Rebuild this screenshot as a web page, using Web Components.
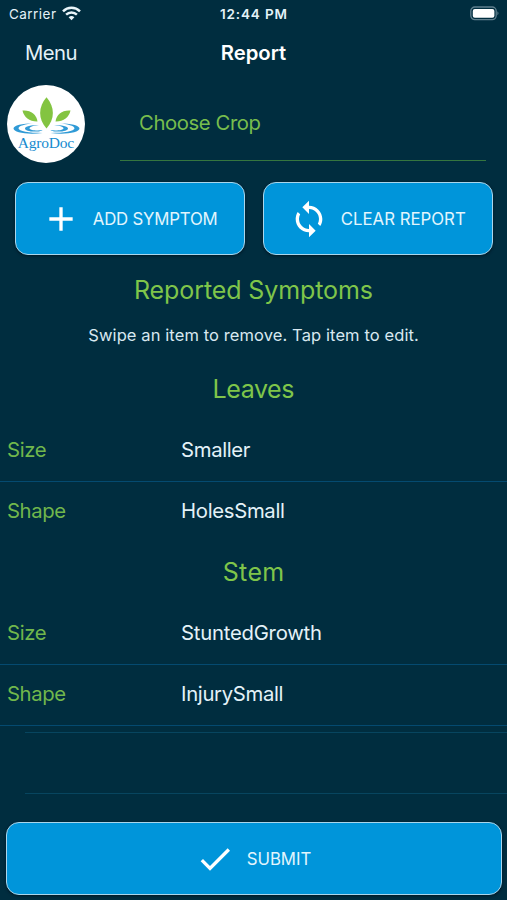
<!DOCTYPE html>
<html lang="en"><head><meta charset="utf-8"><title>Report</title>
<style>
html,body{margin:0;background:#002d3f;}
body{width:507px;height:900px;overflow:hidden;font-family:Inter,"Liberation Sans",sans-serif;color:#e4f2f8}
</style></head><body>
<report-screen></report-screen>
<script>
const define=(name,html,extra)=>customElements.define(name,class extends HTMLElement{
  connectedCallback(){
    if(this.shadowRoot)return;
    this.attachShadow({mode:'open'}).innerHTML=html;
    if(extra)extra(this,this.shadowRoot);
  }
});

/* Single line of text tracked so that it fills the width given in its attribute. */
define('fit-label','<style>:host{display:block;white-space:nowrap;line-height:1.2}span{display:inline-block}</style><span><slot></slot></span>',(host,root)=>{
  const span=root.querySelector('span'),target=+host.getAttribute('width'),n=host.textContent.length;
  const gap=(target-span.getBoundingClientRect().width)/(n-1);
  span.style.letterSpacing=gap+'px';
  span.style.marginRight=-gap+'px';
});

define('status-bar',`<style>
:host{display:grid;grid-template-columns:1fr auto 1fr;align-items:center;height:28px;padding:0 7px 0 9px;box-sizing:border-box;font-size:13.5px}
.left{display:flex;align-items:center;gap:6px}
.left svg{margin-top:-2px}
.time{font-weight:600;margin-right:2px}
.battery{justify-self:end;display:block;margin-top:-1px}
</style>
<div class="left"><fit-label width="47">Carrier</fit-label>
<svg width="19" height="15" viewBox="0 0 19 15"><g fill="none" stroke="#e9f5fa" stroke-width="2.5"><path d="M1 5.3a12.2 12.2 0 0 1 17 0"/><path d="M4.1 8.7a7.8 7.8 0 0 1 10.8 0"/></g><path fill="#e9f5fa" d="M6.6 11.3a4.2 4.2 0 0 1 5.8 0L9.5 14.3z"/></svg></div>
<fit-label class="time" width="67">12:44 PM</fit-label>
<svg class="battery" width="30" height="15" viewBox="0 0 30 15"><rect x=".8" y="1" width="25.4" height="12.6" rx="4" fill="none" stroke="#5f7f8e" stroke-width="1.3"/><rect x="2.8" y="2.9" width="21.6" height="8.9" rx="2" fill="#fff"/><path d="M27.4 5.2q2.2 2 0 4z" fill="#5f7f8e"/></svg>`);

define('nav-bar',`<style>
:host{display:grid;grid-template-columns:1fr auto 1fr;align-items:center;height:49px;box-sizing:border-box;padding:2px 25px 0;font-size:20.3px}
.title{font-weight:600;color:#fff}
</style><fit-label width="52.5">Menu</fit-label><fit-label class="title" width="65.5">Report</fit-label>`);

define('agro-logo',`<style>
:host{display:flex;flex-direction:column;align-items:center;width:78px;height:78px;border-radius:50%;background:#fff;box-sizing:border-box;padding-top:12px}
svg{display:block;flex:none}
fit-label{font:15.5px/18px "Liberation Serif",serif;color:#178bd0;margin-top:-3px}
</style>
<svg width="68" height="40" viewBox="0 0 68 40">
<g fill="#2f9ad6">
<path d="M22 26.200C10 26.400 1.500 28.300 1.500 31.600c0 4 14 6.300 29 4.400C17 36 6.500 34.300 6.500 31.300c0-2.600 7-4.300 15.500-5.100Z"/>
<path d="M27 27.900c-8 0-14 1.400-14 3.600s6 3.700 14 2.900c1.800-.2 3-.7 3.500-1.300-5.500.8-13 .2-13-1.900 0-1.700 4.500-2.700 9.500-3.300Z"/>
<path d="M47 26.200c12 .2 20.500 2.100 20.500 5.400 0 4-14 6.300-29 4.400 13.500 0 24-1.700 24-4.700 0-2.600-7-4.300-15.500-5.100Z"/>
<path d="M42 27.900c8 0 14 1.400 14 3.600s-6 3.700-14 2.900c-1.800-.2-3-.7-3.500-1.300 5.500.8 13 .2 13-1.900 0-1.700-4.500-2.700-9.500-3.300Z"/></g>
<g fill="#83c441"><path d="M34.500 .3C26 10 26 22 34.500 31.500 43 22 43 10 34.500 .3Z"/>
<path d="M10.500 13.500c8-.7 14 3.500 15 11-8 .2-13.500-4-15-11Z"/><path d="M58.500 13.500c-8-.7-14 3.500-15 11 8 .2 13.500-4 15-11Z"/></g></svg>
<fit-label width="56.500">AgroDoc</fit-label>`);

define('crop-picker',`<style>
:host{display:flex;align-items:flex-start;gap:34.500px;height:97px;box-sizing:border-box;padding:8px 21px 0 7px}
:host{height:105px;margin-bottom:0}
.field{flex:1;height:76px;border-bottom:1px solid #35763f;display:flex;align-items:center;padding:1px 0 0 19.500px;box-sizing:border-box;font-size:20.300px;color:#78bd4d}
</style><agro-logo></agro-logo><div class="field"><fit-label width="122">Choose Crop</fit-label></div>`);

const icons={
add:'M19 13h-6v6h-2v-6H5v-2h6V5h2v6h6v2z',
sync:'M12 4V1L8 5l4 4V6c3.310 0 6 2.690 6 6 0 1.010-.25 1.970-.7 2.800l1.460 1.460C19.540 15.030 20 13.570 20 12c0-4.420-3.580-8-8-8zm0 14c-3.310 0-6-2.690-6-6 0-1.010.25-1.970.7-2.800L5.240 7.740C4.460 8.970 4 10.430 4 12c0 4.420 3.580 8 8 8v3l4-4-4-4v3z',
done:'M9 16.200L4.800 12l-1.400 1.400L9 19 21 7l-1.400-1.400L9 16.200z'};
define('action-button',`<style>
:host{display:block}
button{display:flex;width:100%;height:72.500px;align-items:center;justify-content:center;gap:12px;padding:1px 1.500px 0 0;box-sizing:border-box;border:1.500px solid #a9d6ec;border-radius:13px;background:#0095da;color:#e2f5fd;font:16.800px Inter,"Liberation Sans",sans-serif;box-shadow:0 1px 3px #001825}
svg{flex:none;display:block;fill:#fff}
</style><button><svg width="40" height="40" viewBox="0 0 24 24"><path/></svg><slot></slot></button>`,(host,root)=>{
  root.querySelector('path').setAttribute('d',icons[host.getAttribute('icon')]);
});

define('section-title','<style>:host{display:flex;height:61px;align-items:center;justify-content:center;font-size:25px;color:#7fc54a;box-sizing:border-box;padding-bottom:3px}</style><slot></slot>');

define('symptom-row',`<style>
:host{display:grid;grid-template-columns:174px 1fr;align-items:center;height:61px;box-sizing:border-box;padding-left:7px;font-size:20.300px;border-bottom:1px solid transparent}
:host([line]){border-color:#044a70}
::slotted([slot=name]){color:#71b74c}
</style><slot name="name"></slot><slot></slot>`);

define('empty-row','<style>:host{display:block;box-sizing:border-box;height:62px;margin:6px 0 0 25px;border:solid #07455f;border-width:1px 0}</style>');

define('report-screen',`<style>
:host{display:flex;flex-direction:column;width:507px;height:900px}
.actions{display:grid;grid-template-columns:230px 230px;gap:18px;padding:0 14px 0 15px}
.main{height:70px;padding-bottom:0}
.hint{display:flex;justify-content:center;align-items:center;height:22px;font-size:16.500px;color:#d8e8f0;margin-bottom:13px}
.submit{margin:28.500px 5.500px 0 6px}
</style>
<status-bar></status-bar><nav-bar></nav-bar><crop-picker></crop-picker>
<div class="actions"><action-button icon="add"><fit-label width="125">ADD SYMPTOM</fit-label></action-button>
<action-button icon="sync"><fit-label width="125">CLEAR REPORT</fit-label></action-button></div>
<section-title class="main"><fit-label width="239">Reported Symptoms</fit-label></section-title>
<div class="hint"><fit-label width="330.500">Swipe an item to remove. Tap item to edit.</fit-label></div>
<section-title><fit-label width="82">Leaves</fit-label></section-title>
<symptom-row line><fit-label slot="name" width="39.500">Size</fit-label><fit-label width="69.500">Smaller</fit-label></symptom-row>
<symptom-row><fit-label slot="name" width="59">Shape</fit-label><fit-label width="104">HolesSmall</fit-label></symptom-row>
<section-title><fit-label width="61.500">Stem</fit-label></section-title>
<symptom-row line><fit-label slot="name" width="39.500">Size</fit-label><fit-label width="141">StuntedGrowth</fit-label></symptom-row>
<symptom-row line><fit-label slot="name" width="59">Shape</fit-label><fit-label width="102.500">InjurySmall</fit-label></symptom-row>
<empty-row></empty-row>
<action-button class="submit" icon="done"><fit-label width="64.500">SUBMIT</fit-label></action-button>`);
</script></body></html>
